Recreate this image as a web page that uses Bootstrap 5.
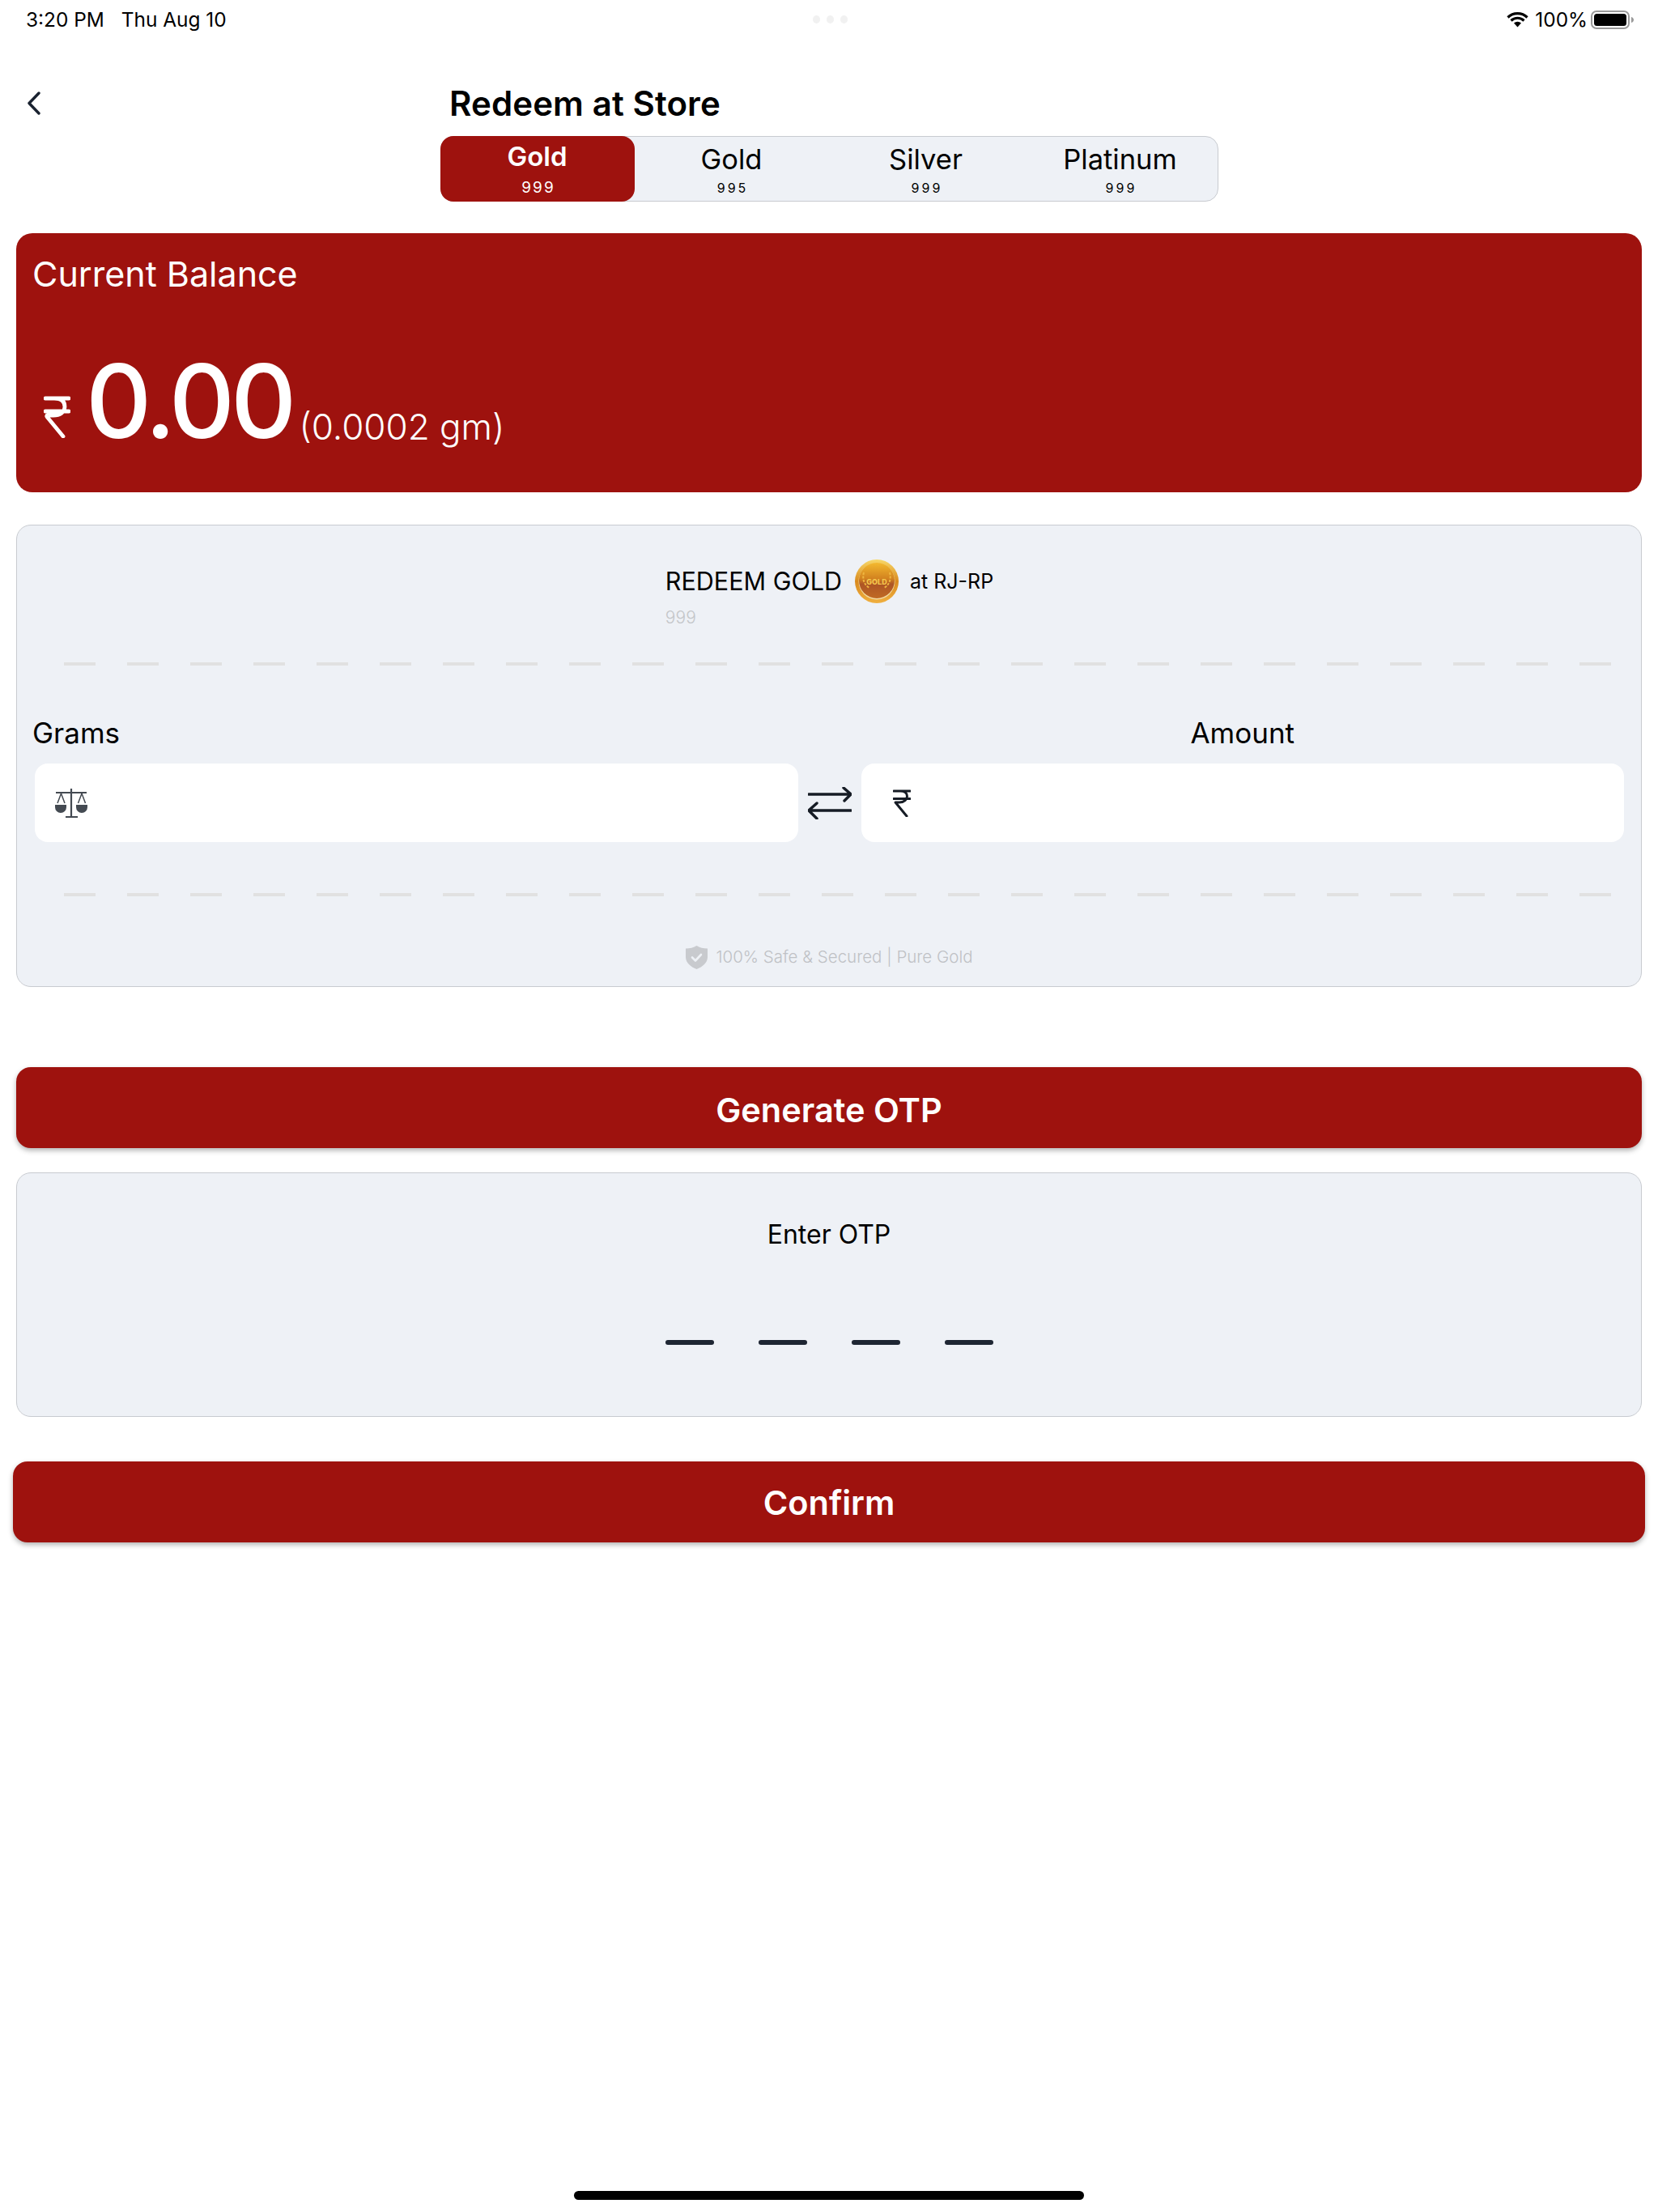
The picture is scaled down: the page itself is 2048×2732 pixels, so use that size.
<!DOCTYPE html>
<html lang="en">

<head>
    <meta charset="UTF-8">
    <meta name="viewport" content="width=device-width, initial-scale=1.0">
    <title>Redeem at Store</title>
    <link href="https://cdn.jsdelivr.net/npm/bootstrap@5.3.0/dist/css/bootstrap.min.css" rel="stylesheet">
    <style>
        body {
            background-color: #fff;
            color: #000;
            font-family: Inter, "Liberation Sans", sans-serif;
        }

        .screen {
            min-height: 2732px;
            padding: 0 20px;
        }

        /* status bar */
        .status-row {
            height: 48px;
            margin: 0 -20px;
            padding: 0 30px 0 32px;
            font-size: 24.4px;
            line-height: 48px;
        }

        .status-side {
            flex: 1 1 0;
        }

        .status-date {
            margin-left: 21px;
        }

        .pill-dot {
            width: 9px;
            height: 10px;
            border-radius: 50%;
            background-color: #f1f1f1;
        }

        /* header */
        .title-row {
            height: 120px;
            margin-left: 13px;
            padding-top: 65px;
        }

        .back-btn {
            width: 17px;
            height: 29px;
            margin-right: 505px;
        }

        .page-title {
            font-size: 42px;
            font-weight: 600;
            line-height: 30px;
            letter-spacing: .1px;
        }

        .metal-tabs {
            width: 961px;
            height: 81px;
            background-color: #eef1f6;
            border: 1px solid #c8cbd0;
            border-radius: 16px;
        }

        .metal-tab {
            width: 240px;
            padding-top: 9px;
            text-align: center;
            border-radius: 16px;
            margin: -1px 0;
        }

        .metal-name {
            font-size: 34.5px;
            line-height: 40px;
        }

        .metal-purity {
            font-size: 16px;
            line-height: 16px;
            letter-spacing: 3px;
            text-indent: 3px;
            margin-top: 7px;
        }

        .metal-tab-on {
            background-color: #9e120e;
            color: #fff;
            padding-top: 5px;
            margin-left: -1px;
            height: 81px;
        }

        .metal-tab-on .metal-name {
            font-weight: 600;
            font-size: 33px;
        }

        .metal-tab-on .metal-purity {
            font-size: 19px;
            letter-spacing: 2px;
            margin-top: 11px;
        }

        /* balance */
        .balance-box {
            height: 320px;
            margin-top: 39px;
            padding: 20px 20px 0;
            background-color: #9e120e;
            color: #fff;
            border: 0;
            border-radius: 20px;
        }

        .balance-label {
            font-size: 43px;
            line-height: 60px;
        }

        .balance-row {
            height: 150px;
            margin-top: 52px;
            line-height: 150px;
        }

        .rupee-big {
            width: 33px;
            height: 52px;
            margin: 0 19px 0 14px;
        }

        .balance-value {
            font-size: 126px;
            font-weight: 500;
            letter-spacing: -5px;
        }

        .balance-grams {
            font-size: 44px;
            font-weight: 300;
            margin-left: 8px;
            transform: translateY(2px);
        }

        /* panels */
        .soft-panel {
            background-color: #eef1f6;
            border: 1px solid #c8cbd0;
            border-radius: 18px;
        }

        .redeem-panel {
            height: 571px;
            margin-top: 40px;
            padding: 42px 21px 21px 22px;
        }

        .redeem-title {
            font-size: 30.5px;
            line-height: 54px;
        }

        .redeem-purity {
            font-size: 21px;
            font-weight: 300;
            line-height: 26px;
            margin-top: 5px;
            color: #c4c6c9;
        }

        .coin-icon {
            width: 54px;
            height: 54px;
            margin: 0 14px 0 16px;
        }

        .redeem-at {
            font-size: 25px;
            line-height: 54px;
        }

        .dash-line {
            height: 4px;
            margin: 42px 16px 0 36px;
            background-image: repeating-linear-gradient(90deg, #e1e1e1 0 39px, transparent 39px 78px);
        }

        .convert-grid {
            display: grid;
            grid-template-columns: 1fr 78px 1fr;
            margin-top: 58px;
        }

        .convert-label {
            font-size: 35px;
            line-height: 50px;
            margin-bottom: 13px;
        }

        .label-grams {
            margin-left: -3px;
        }

        .value-field {
            height: 97px;
            background-color: #fff;
            border: 0;
            border-radius: 16px;
        }

        .field-scale {
            padding-left: 25px;
        }

        .field-rupee {
            padding-left: 39px;
        }

        .dash-lower {
            margin-top: 63px;
        }

        .safe-row {
            margin-top: 60px;
            height: 30px;
            font-size: 20.5px;
            font-weight: 300;
            color: #bfc1c5;
        }

        .shield-icon {
            width: 27px;
            height: 29px;
            margin-right: 10px;
        }

        /* buttons */
        .red-btn {
            height: 100px;
            padding-top: 12px;
            background-color: #9e120e;
            border: 0;
            border-radius: 18px;
            color: #fff;
            font-size: 41.5px;
            font-weight: 600;
            box-shadow: 0 3px 6px rgba(0, 0, 0, .3);
        }

        .red-btn:hover {
            background-color: #9e120e;
            color: #fff;
        }

        .btn-generate {
            margin-top: 99px;
        }

        .btn-confirm {
            width: 2016px;
            margin: 55px -4px 0;
            padding-top: 9px;
        }

        .otp-panel {
            height: 302px;
            margin-top: 30px;
            padding-top: 50px;
        }

        .otp-title {
            font-size: 32px;
            line-height: 52px;
        }

        .otp-slots {
            margin-top: 104px;
            gap: 55px;
        }

        .otp-slot {
            width: 60px;
            height: 6px;
            border-radius: 3px;
            background-color: #1e2633;
        }

        .home-bar {
            width: 630px;
            height: 11px;
            margin-bottom: 15px;
            border-radius: 6px;
            background-color: #000;
        }
    </style>
</head>

<body>
    <div class="screen d-flex flex-column">

        <div class="status-row d-flex align-items-center">
            <div class="status-side d-flex">
                <span>3:20 PM</span>
                <span class="status-date">Thu Aug 10</span>
            </div>
            <div class="d-flex gap-2">
                <span class="pill-dot"></span>
                <span class="pill-dot"></span>
                <span class="pill-dot"></span>
            </div>
            <div class="status-side d-flex justify-content-end align-items-center">
                <svg width="27" height="20" viewBox="0 0 27 20" class="me-2">
                    <path d="M1.5 7.5a17 17 0 0 1 24 0M5.5 11.5a11.5 11.5 0 0 1 16 0" fill="none" stroke="#000" stroke-width="3.2" />
                    <path d="M9 14.6a6.5 6.5 0 0 1 9 0L13.5 19.5z" fill="#000" />
                </svg>
                <span>100%</span>
                <svg width="53" height="23" viewBox="0 0 53 23" class="ms-1">
                    <rect x="1" y="1" width="46" height="21" rx="6" fill="none" stroke="#9a9a9a" stroke-width="2" />
                    <rect x="4" y="4" width="40" height="15" rx="3.5" fill="#000" />
                    <path d="M50 8c2 .5 3 2 3 3.5s-1 3-3 3.5z" fill="#9a9a9a" />
                </svg>
            </div>
        </div>

        <div class="title-row d-flex align-items-start">
            <svg class="back-btn" viewBox="0 0 17 29">
                <path d="M15 2 3 14.5 15 27" fill="none" stroke="#1a2230" stroke-width="3.4" stroke-linecap="round" stroke-linejoin="round" />
            </svg>
            <div class="page-title">Redeem at Store</div>
        </div>

        <div class="metal-tabs d-flex align-self-center">
            <div class="metal-tab metal-tab-on">
                <div class="metal-name">Gold</div>
                <div class="metal-purity">999</div>
            </div>
            <div class="metal-tab">
                <div class="metal-name">Gold</div>
                <div class="metal-purity">995</div>
            </div>
            <div class="metal-tab">
                <div class="metal-name">Silver</div>
                <div class="metal-purity">999</div>
            </div>
            <div class="metal-tab">
                <div class="metal-name">Platinum</div>
                <div class="metal-purity">999</div>
            </div>
        </div>

        <div class="card balance-box">
            <div class="balance-label">Current Balance</div>
            <div class="balance-row d-flex align-items-baseline">
                <svg class="rupee-big" viewBox="0 0 33 52">
                    <path d="M2 3H31M2 19H31M13 3c9 0 13 4 13 10.500S20 24 12 24H4.500c-.8 0-1 1-.5 1.700L24 50" fill="none" stroke="#fff" stroke-width="4.800" stroke-linecap="round" stroke-linejoin="round" />
                </svg>
                <span class="balance-value">0.00</span>
                <span class="balance-grams">(0.0002 gm)</span>
            </div>
        </div>

        <div class="soft-panel redeem-panel">
            <div class="d-flex justify-content-center align-items-start">
                <div>
                    <div class="redeem-title">REDEEM GOLD</div>
                    <div class="redeem-purity">999</div>
                </div>
                <svg class="coin-icon" viewBox="0 0 54 54">
                    <defs>
                        <linearGradient id="coinRim" x1="0" y1="0" x2="0" y2="1">
                            <stop offset="0" stop-color="#f8d96a" />
                            <stop offset=".5" stop-color="#d98a1e" />
                            <stop offset="1" stop-color="#f0b040" />
                        </linearGradient>
                        <linearGradient id="coinFace" x1="0" y1="0" x2="0" y2="1">
                            <stop offset="0" stop-color="#f3b92f" />
                            <stop offset=".45" stop-color="#d2821f" />
                            <stop offset=".6" stop-color="#ad5524" />
                            <stop offset="1" stop-color="#c06a24" />
                        </linearGradient>
                    </defs>
                    <circle cx="27" cy="27" r="27" fill="url(#coinRim)" />
                    <circle cx="27" cy="27" r="22.500" fill="#f2d9a0" />
                    <circle cx="27" cy="26" r="22" fill="url(#coinFace)" />
                    <path d="M11 16c-2 8 0 15 7 19M43 16c2 8 0 15-7 19" fill="none" stroke="#eeb540" stroke-width="2" stroke-dasharray="3 1.500" />
                    <text x="27" y="31" text-anchor="middle" font-family="Inter, sans-serif" font-size="9" font-weight="800" fill="#f4c64c">GOLD</text>
                </svg>
                <div class="redeem-at">at RJ-RP</div>
            </div>

            <div class="dash-line"></div>

            <div class="convert-grid">
                <div class="convert-label label-grams">Grams</div>
                <div></div>
                <div class="convert-label text-center">Amount</div>

                <div class="value-field field-scale d-flex align-items-center">
                    <svg width="41" height="36" viewBox="0 0 41 36">
                        <path d="M1 5H39M20 0V35M13 35H28" fill="none" stroke="#444a52" stroke-width="2.200" />
                        <path d="M7.500 6 3 18M7.500 6 12 18M33 6 28.500 18M33 6 37.500 18" fill="none" stroke="#444a52" stroke-width="1.500" />
                        <path d="M0 20H14V23A7 7 0 0 1 0 23ZM26 20H40V23A7 7 0 0 1 26 23Z" fill="#444a52" />
                    </svg>
                </div>
                <div class="d-flex align-items-center justify-content-center">
                    <svg width="54" height="40" viewBox="0 0 54 40">
                        <path d="M1 9H53M44 1 53 9 45 17M53 29H1M11 20 1 29 11 39" fill="none" stroke="#161c25" stroke-width="3.400" stroke-linecap="round" stroke-linejoin="round" />
                    </svg>
                </div>
                <div class="value-field field-rupee d-flex align-items-center">
                    <svg width="22" height="34" viewBox="0 0 22 34">
                        <path d="M1 2H21M1 11.500H21M9 2c6 0 8.500 3 8.500 6.500S14 16 8 16H3l14 17" fill="none" stroke="#161c25" stroke-width="3" stroke-linecap="round" stroke-linejoin="round" />
                    </svg>
                </div>
            </div>

            <div class="dash-line dash-lower"></div>

            <div class="safe-row d-flex align-items-center justify-content-center">
                <svg class="shield-icon" viewBox="0 0 27 29">
                    <path d="M13.500 0C17 2.500 22 3.500 27 3.500V14C27 21 21 26 13.500 29 6 26 0 21 0 14V3.500C5 3.500 10 2.500 13.500 0Z" fill="#c8cace" />
                    <path d="M8 14.500l4 4 7-7.500" fill="none" stroke="#eef1f6" stroke-width="2.600" stroke-linecap="round" stroke-linejoin="round" />
                </svg>
                <span>100% Safe &amp; Secured | Pure Gold</span>
            </div>
        </div>

        <button type="button" class="btn red-btn btn-generate w-100">Generate OTP</button>

        <div class="soft-panel otp-panel text-center">
            <div class="otp-title">Enter OTP</div>
            <div class="otp-slots d-flex justify-content-center">
                <span class="otp-slot"></span>
                <span class="otp-slot"></span>
                <span class="otp-slot"></span>
                <span class="otp-slot"></span>
            </div>
        </div>

        <button type="button" class="btn red-btn btn-confirm">Confirm</button>

        <div class="home-bar mt-auto align-self-center"></div>
    </div>

    <script src="https://cdn.jsdelivr.net/npm/bootstrap@5.3.0/dist/js/bootstrap.bundle.min.js"></script>
</body>

</html>
